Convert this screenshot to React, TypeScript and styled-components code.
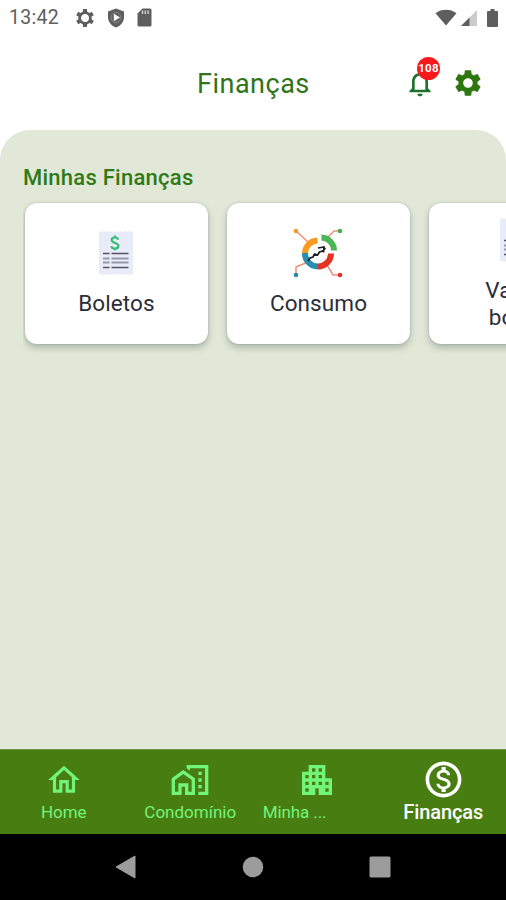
import React from "react";
import styled, { createGlobalStyle } from "styled-components";
import {
  MdSettings,
  MdNotificationsNone,
  MdOutlineHome,
  MdOutlineHomeWork,
  MdApartment,
  MdOutlineMonetizationOn,
} from "react-icons/md";

const GlobalStyle = createGlobalStyle`
  * { box-sizing: border-box; }
  html, body { margin: 0; padding: 0; background: #fff; overflow: hidden; }
  svg { display: block; flex: none; }
`;

const Screen = styled.div`
  width: 506px;
  height: 900px;
  display: flex;
  flex-direction: column;
  overflow: hidden;
  background: #fff;
  font-family: Roboto, "Liberation Sans", sans-serif;
`;

const StatusBar = styled.div`
  height: 35px;
  padding: 0 8px 0 9px;
  display: flex;
  align-items: center;
  justify-content: space-between;
  color: #5e5e5e;
`;

const StatusGroup = styled.div<{ $gap: number }>`
  display: flex;
  align-items: center;
  gap: ${(p) => p.$gap}px;
`;

const Clock = styled.span`
  width: 50px;
  margin-right: 4px;
  padding-top: 1px;
  font-size: 19.5px;
  line-height: 24px;
  letter-spacing: 0.3px;
`;

const Header = styled.header`
  height: 95px;
  padding: 0 22px 0 0;
  display: grid;
  grid-template-columns: 197px 1fr auto;
  align-items: center;
`;

const Title = styled.h1`
  grid-column: 2;
  margin: 0;
  padding-top: 2px;
  font-size: 27px;
  line-height: 36px;
  font-weight: 400;
  letter-spacing: 0.5px;
  color: #2f7418;
`;

const HeaderActions = styled.div`
  display: flex;
  align-items: center;
  gap: 16px;
  color: #2d7610;
`;

const BellButton = styled.div`
  position: relative;
  color: #20702d;
`;

const Badge = styled.span`
  position: absolute;
  left: 13px;
  top: -10px;
  width: 23px;
  height: 23px;
  border-radius: 50%;
  background: #f8191d;
  color: #fff;
  font-size: 11.5px;
  font-weight: 700;
  line-height: 23px;
  letter-spacing: 0.3px;
  text-align: center;
`;

const Content = styled.main`
  flex: 1;
  min-height: 0;
  padding: 34px 0 0 23px;
  border-radius: 30px 30px 0 0;
  background: #e1e8d8;
`;

const SectionTitle = styled.h2`
  margin: 0;
  font-size: 22px;
  line-height: 28px;
  font-weight: 500;
  letter-spacing: 0.25px;
  color: #2f7a16;
`;

const CardRow = styled.div`
  display: flex;
  gap: 19px;
  padding: 11px 0 12px 2px;
  overflow: hidden;
`;

const Card = styled.article`
  flex: none;
  width: 183px;
  height: 141px;
  padding-top: 22px;
  display: flex;
  flex-direction: column;
  align-items: center;
  border-radius: 12px;
  background: #fff;
  box-shadow: 0 4px 7px rgba(60, 75, 70, 0.3), 0 0 2px rgba(60, 70, 90, 0.3);
`;

const IconSlot = styled.div<{ $raised?: boolean }>`
  height: ${(p) => (p.$raised ? 59 : 65)}px;
  margin-top: ${(p) => (p.$raised ? -7 : 0)}px;
  margin-right: ${(p) => (p.$raised ? 7 : 1)}px;
  display: flex;
  align-items: flex-start;
`;

const IconNudge = styled.div<{ $top: number }>`
  padding-top: ${(p) => p.$top}px;
`;

const CardLabel = styled.span`
  font-size: 22.5px;
  line-height: 27px;
  letter-spacing: 0.1px;
  text-align: center;
  white-space: pre-line;
  color: #2b2e38;
`;

const BottomNav = styled.nav`
  height: 85px;
  display: grid;
  grid-template-columns: repeat(4, 1fr);
  background: #487e11;
  border-top: 1px solid #6c9545;
`;

const NavItem = styled.div<{ $active?: boolean }>`
  padding: 9px 0 0 1px;
  display: flex;
  flex-direction: column;
  align-items: center;
  color: ${(p) => (p.$active ? "#fff" : "#71f579")};
`;

const NavIcon = styled.div`
  height: 41px;
  display: flex;
  align-items: center;
`;

const NavLabel = styled.span<{ $active?: boolean; $start?: boolean }>`
  width: ${(p) => (p.$start ? "108px" : "auto")};
  font-size: ${(p) => (p.$active ? 20 : 17)}px;
  font-weight: ${(p) => (p.$active ? 500 : 400)};
  line-height: 24px;
  letter-spacing: ${(p) => (p.$active ? -0.1 : p.$start ? -0.1 : 0)}px;
  white-space: nowrap;
`;

const SystemBar = styled.div`
  height: 66px;
  padding: 0 115px;
  display: flex;
  align-items: center;
  justify-content: space-between;
  background: #000;
`;

const StatusGearIcon = () => (
  <svg width="20" height="20" viewBox="0 0 20 20">
    <g stroke="#5e5e5e" strokeWidth="4">
      <path d="M10 1v18M2.200 5.500l15.600 9M2.200 14.500l15.600-9" />
    </g>
    <circle cx="10" cy="10" r="5.400" fill="#fff" stroke="#5e5e5e" strokeWidth="2.800" />
  </svg>
);

const ShieldIcon = () => (
  <svg width="18" height="20" viewBox="0 0 18 20">
    <path d="M9 .5 17 3.600V9c0 5-3.300 8.900-8 10.500C4.300 17.900 1 14 1 9V3.600Z" fill="#5e5e5e" />
    <circle cx="9" cy="9.500" r="5" fill="none" stroke="#8c8c8c" strokeWidth=".8" />
    <path d="M6.800 5.800 13 9.500 6.800 13.200Z" fill="#fff" />
  </svg>
);

const SdCardIcon = () => (
  <svg width="15" height="19" viewBox="0 0 15 19">
    <path d="M5.500.5H13a1.500 1.500 0 0 1 1.500 1.500v15A1.500 1.500 0 0 1 13 18.500H2A1.500 1.500 0 0 1 .5 17V5.500Z" fill="#5e5e5e" />
    <path d="M5.500 2.500v3.500M8.300 2.500v3.500M11.100 2.500v3.500" stroke="#ccc" strokeWidth="1.500" />
  </svg>
);

const WifiIcon = () => (
  <svg width="22" height="17" viewBox="0 0 22 17">
    <path d="M.5 4.200C6.500-.3 15.500-.3 21.500 4.200L11 16.500Z" fill="#5e5e5e" />
  </svg>
);

const SignalIcon = () => (
  <svg width="16" height="16" viewBox="0 0 16 16">
    <path d="M16 0v16H0Z" fill="#ccc" />
    <path d="M8.500 7.500V16H0Z" fill="#5e5e5e" />
  </svg>
);

const BatterySlot = styled.div`
  padding-left: 6px;
`;

const BatteryIcon = () => (
  <svg width="11" height="18" viewBox="0 0 11 18">
    <path d="M3.500 0h4v2H10a1 1 0 0 1 1 1v14a1 1 0 0 1-1 1H1a1 1 0 0 1-1-1V3a1 1 0 0 1 1-1h2.500Z" fill="#5e5e5e" />
  </svg>
);

const InvoiceIcon = () => (
  <svg width="34" height="44" viewBox="0 0 34 44">
    <path
      d="M0 1l2.400-1 2.400 1 2.400-1 2.400 1L12 0l2.400 1 2.400-1 2.400 1 2.400-1L24 1l2.400-1 2.400 1 2.400-1L34 1v42l-2.400 1-2.400-1-2.400 1-2.400-1-2.400 1-2.400-1-2.400 1-2.400-1-2.400 1-2.400-1L9.600 44l-2.400-1-2.400 1-2.400-1L0 43Z"
      fill="#e8ecf9"
    />
    <path d="M19.300 8.700C18.700 7 17.500 6.500 16 6.500c-2 0-3.300.9-3.300 2.500 0 3.700 6.700 2.200 6.700 5.800 0 1.900-1.500 2.900-3.500 2.900-1.900 0-3.200-.8-3.700-2.500M16 4.500v2m0 11.200v1.500" fill="none" stroke="#35bd72" strokeWidth="2.200" />
    <path d="M4 22.500h6.500M12.500 22.500h17M4 36.500h6.500M12.500 36.500h17" stroke="#51545f" strokeWidth="1.700" />
    <path d="M4 27.500h6.500M12.500 27.500h17M4 31.500h6.500M12.500 31.500h17" stroke="#9699a5" strokeWidth="1.900" />
  </svg>
);

const UsageIcon = () => (
  <svg width="50" height="50" viewBox="0 0 50 50">
    <g fill="none" stroke="#f58d78" strokeWidth="1.500">
      <path d="M3 3 15 14M47 3h-6l-8 8M3 47v-8l12-5M34 37l6 10h7" />
    </g>
    <g fill="none" strokeWidth="6">
      <path d="M12 25.500A13 13 0 0 1 24.500 12.500" stroke="#fb9a1c" />
      <path d="M28.500 9.500A13 13 0 0 1 41 22.500" stroke="#4cb657" />
      <path d="M12 25A13 13 0 0 0 25 38.500" stroke="#278eb2" />
      <path d="M25 38.500A13 13 0 0 0 38 25.500" stroke="#e33322" />
    </g>
    <path d="M15 33l2-3 3-1 1.500-3 3 1 2-3 3-1 3-3M25 20l6-1-.5 5.500" fill="none" stroke="#1c1c1c" strokeWidth="1.700" />
    <circle cx="3" cy="3" r="2.300" fill="#f4962b" />
    <circle cx="47" cy="3" r="2.300" fill="#4aad4f" />
    <circle cx="3" cy="47" r="2.300" fill="#248bad" />
    <circle cx="47" cy="47" r="2.300" fill="#df2e24" />
  </svg>
);

const BackIcon = () => (
  <svg width="21" height="24" viewBox="0 0 21 24">
    <path d="M20 1v22L1 12Z" fill="#9c9c9c" stroke="#9c9c9c" strokeLinejoin="round" />
  </svg>
);

const HomeDot = () => (
  <svg width="22" height="22" viewBox="0 0 22 22">
    <circle cx="11" cy="11" r="10.300" fill="#9c9c9c" />
  </svg>
);

const RecentsIcon = () => (
  <svg width="22" height="22" viewBox="0 0 22 22">
    <rect x=".5" y=".5" width="21" height="21" rx="1.500" fill="#9c9c9c" />
  </svg>
);

const cards = [
  { label: "Boletos", icon: <InvoiceIcon />, raised: false, offset: 6 },
  { label: "Consumo", icon: <UsageIcon />, raised: false, offset: 3 },
  { label: "Validar\nboleto", icon: <InvoiceIcon />, raised: true, offset: 0 },
];

export default function App() {
  return (
    <>
      <GlobalStyle />
      <Screen>
        <StatusBar>
          <StatusGroup $gap={12}>
            <Clock>13:42</Clock>
            <StatusGearIcon />
            <ShieldIcon />
            <SdCardIcon />
          </StatusGroup>
          <StatusGroup $gap={4}>
            <WifiIcon />
            <SignalIcon />
            <BatterySlot>
              <BatteryIcon />
            </BatterySlot>
          </StatusGroup>
        </StatusBar>
        <Header>
          <Title>Finanças</Title>
          <HeaderActions>
            <BellButton>
              <MdNotificationsNone size={32} />
              <Badge>108</Badge>
            </BellButton>
            <MdSettings size={32} />
          </HeaderActions>
        </Header>
        <Content>
          <SectionTitle>Minhas Finanças</SectionTitle>
          <CardRow>
            {cards.map((c) => (
              <Card key={c.label}>
                <IconSlot $raised={c.raised}>
                  <IconNudge $top={c.offset}>{c.icon}</IconNudge>
                </IconSlot>
                <CardLabel>{c.label}</CardLabel>
              </Card>
            ))}
          </CardRow>
        </Content>
        <BottomNav>
          <NavItem>
            <NavIcon><MdOutlineHome size={38} /></NavIcon>
            <NavLabel>Home</NavLabel>
          </NavItem>
          <NavItem>
            <NavIcon><MdOutlineHomeWork size={40} /></NavIcon>
            <NavLabel>Condomínio</NavLabel>
          </NavItem>
          <NavItem>
            <NavIcon><MdApartment size={40} /></NavIcon>
            <NavLabel $start>Minha ...</NavLabel>
          </NavItem>
          <NavItem $active>
            <NavIcon><MdOutlineMonetizationOn size={43} /></NavIcon>
            <NavLabel $active>Finanças</NavLabel>
          </NavItem>
        </BottomNav>
        <SystemBar>
          <BackIcon />
          <HomeDot />
          <RecentsIcon />
        </SystemBar>
      </Screen>
    </>
  );
}
